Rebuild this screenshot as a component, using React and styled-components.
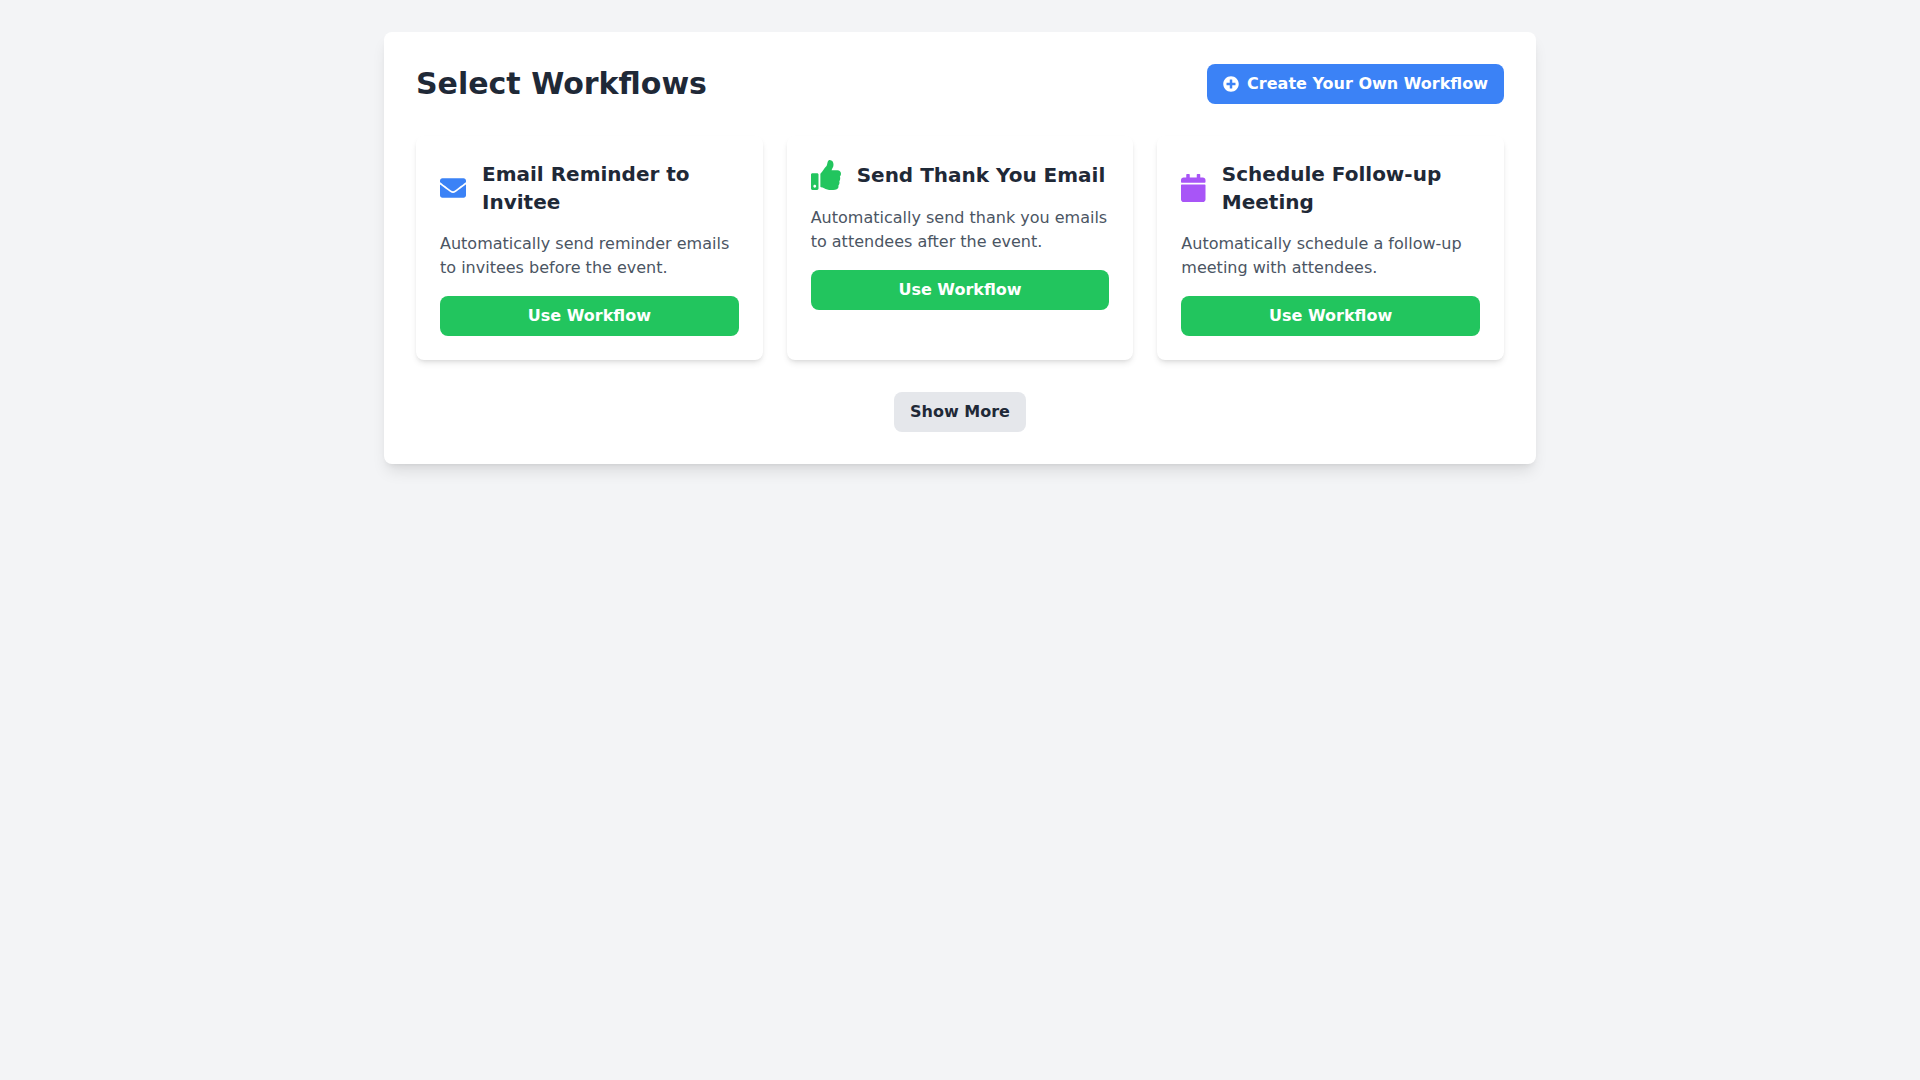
import React from "react";
import styled, { createGlobalStyle } from "styled-components";
import { FaEnvelope, FaThumbsUp, FaCalendar, FaPlusCircle } from "react-icons/fa";

const Global = createGlobalStyle`
  * { box-sizing: border-box; }
  html, body { margin: 0; background: #f3f4f6; }
  body { font-family: "DejaVu Sans", sans-serif; font-size: 16px; line-height: 24px; min-height: 100vh; }
`;

const Page = styled.div`
  padding: 32px;
`;

const Panel = styled.main`
  width: 1152px;
  margin: 0 auto;
  padding: 32px;
  background: #fff;
  border-radius: 8px;
  box-shadow: 0 10px 15px -3px rgba(0, 0, 0, 0.1), 0 4px 6px -4px rgba(0, 0, 0, 0.1);
`;

const Header = styled.header`
  display: flex;
  align-items: center;
  justify-content: space-between;
  margin-bottom: 32px;
`;

const Title = styled.h1`
  margin: 0;
  font-size: 30px;
  line-height: 36px;
  font-weight: 700;
  color: #1f2937;
`;

const BaseButton = styled.button`
  border: 0;
  border-radius: 8px;
  padding: 8px 16px;
  font: 700 16px/24px "DejaVu Sans", sans-serif;
  cursor: pointer;
`;

const CreateButton = styled(BaseButton)`
  display: flex;
  align-items: center;
  gap: 8px;
  background: #3b82f6;
  color: #fff;
`;

const Grid = styled.section`
  display: grid;
  grid-template-columns: repeat(3, 1fr);
  gap: 24px;
`;

const Card = styled.article`
  padding: 24px;
  background: #fff;
  border-radius: 8px;
  box-shadow: 0 4px 6px -1px rgba(0, 0, 0, 0.1), 0 2px 4px -2px rgba(0, 0, 0, 0.1);
`;

const CardHead = styled.div`
  display: flex;
  align-items: center;
  gap: 16px;
  margin-bottom: 16px;
`;

const IconSlot = styled.span`
  flex: none;
  display: flex;
  width: ${(p) => p.$width}px;
  height: ${(p) => p.$size}px;
  color: ${(p) => p.$color};

  svg {
    width: 100%;
    height: 100%;
  }
`;

const CardTitle = styled.h2`
  margin: 0;
  font-size: 20px;
  line-height: 28px;
  font-weight: 700;
  color: #1f2937;
`;

const Description = styled.p`
  margin: 0 0 16px;
  color: #4b5563;
`;

const UseButton = styled(BaseButton)`
  display: block;
  width: 100%;
  background: #22c55e;
  color: #fff;
`;

const Footer = styled.div`
  display: flex;
  justify-content: center;
  margin-top: 32px;
`;

const MoreButton = styled(BaseButton)`
  background: #e5e7eb;
  color: #1f2937;
`;

const workflows = [
  {
    title: "Email Reminder to Invitee",
    text: "Automatically send reminder emails to invitees before the event.",
    Icon: FaEnvelope,
    color: "#3b82f6",
    size: 26,
    width: 26,
  },
  {
    title: "Send Thank You Email",
    text: "Automatically send thank you emails to attendees after the event.",
    Icon: FaThumbsUp,
    color: "#22c55e",
    size: 30,
    width: 30,
  },
  {
    title: "Schedule Follow-up Meeting",
    text: "Automatically schedule a follow-up meeting with attendees.",
    Icon: FaCalendar,
    color: "#a855f7",
    size: 28,
    width: 24.5,
  },
];

export default function App() {
  return (
    <Page>
      <Global />
      <Panel>
        <Header>
          <Title>Select Workflows</Title>
          <CreateButton>
            <FaPlusCircle size={16} />
            Create Your Own Workflow
          </CreateButton>
        </Header>
        <Grid>
          {workflows.map(({ title, text, Icon, color, size, width }) => (
            <Card key={title}>
              <CardHead>
                <IconSlot $color={color} $size={size} $width={width}>
                  <Icon />
                </IconSlot>
                <CardTitle>{title}</CardTitle>
              </CardHead>
              <Description>{text}</Description>
              <UseButton>Use Workflow</UseButton>
            </Card>
          ))}
        </Grid>
        <Footer>
          <MoreButton>Show More</MoreButton>
        </Footer>
      </Panel>
    </Page>
  );
}
